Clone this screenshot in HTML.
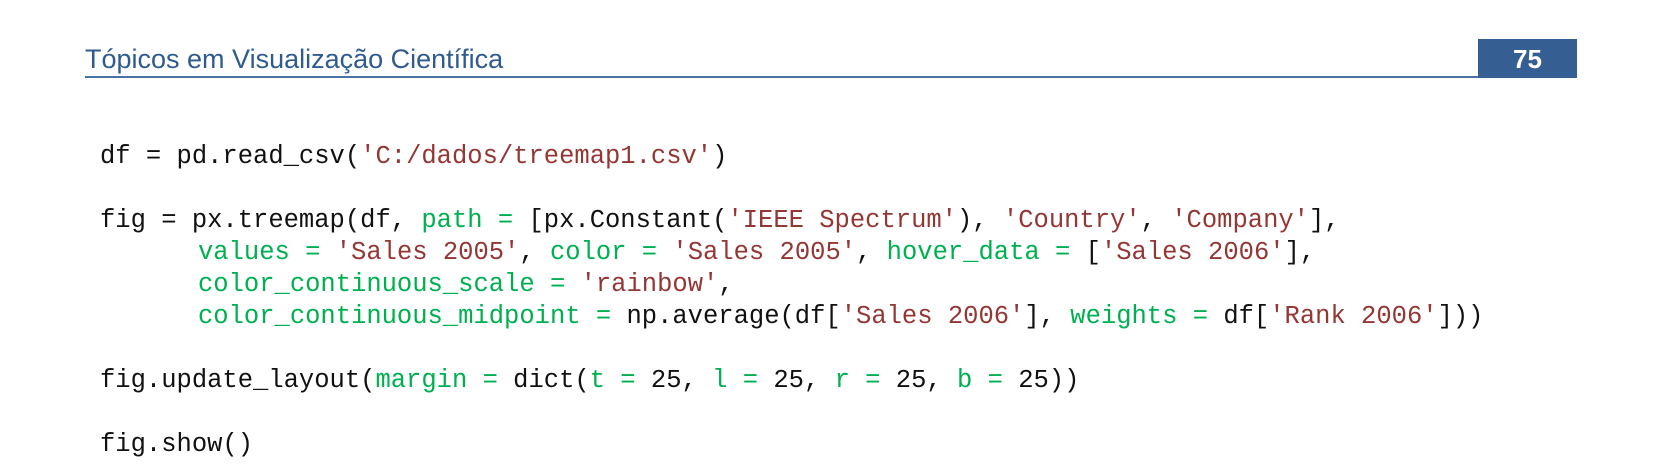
<!DOCTYPE html>
<html><head><meta charset="utf-8"><style>
body{margin:0;width:1654px;height:470px;background:#fff;position:relative;overflow:hidden}
.t{position:absolute;left:85px;top:46px;font:27px/27px "Liberation Sans",sans-serif;color:#2f5b8f;white-space:nowrap}
.ln{position:absolute;left:85px;top:76px;width:1393px;height:2px;background:#4a72a4}
.box{position:absolute;left:1478px;top:39px;width:99px;height:39px;background:#355f92;color:#fff;font:bold 26px "Liberation Sans",sans-serif;text-align:center;line-height:40px}
pre{position:absolute;left:100px;top:141px;margin:0;font:25.5px/32px "Liberation Mono",monospace;color:#111}
.i{display:inline-block;width:98px}
.g{color:#00b050}.r{color:#943634}
</style></head><body>
<div class="t">Tópicos em Visualização Científica</div>
<div class="ln"></div>
<div class="box">75</div>
<pre>df = pd.read_csv(<span class="r">'C:/dados/treemap1.csv'</span>)

fig = px.treemap(df, <span class="g">path =</span> [px.Constant(<span class="r">'IEEE Spectrum'</span>), <span class="r">'Country'</span>, <span class="r">'Company'</span>],
<span class="i"></span><span class="g">values =</span> <span class="r">'Sales 2005'</span>, <span class="g">color =</span> <span class="r">'Sales 2005'</span>, <span class="g">hover_data =</span> [<span class="r">'Sales 2006'</span>],
<span class="i"></span><span class="g">color_continuous_scale =</span> <span class="r">'rainbow'</span>,
<span class="i"></span><span class="g">color_continuous_midpoint =</span> np.average(df[<span class="r">'Sales 2006'</span>], <span class="g">weights =</span> df[<span class="r">'Rank 2006'</span>]))

fig.update_layout(<span class="g">margin =</span> dict(<span class="g">t =</span> 25, <span class="g">l =</span> 25, <span class="g">r =</span> 25, <span class="g">b =</span> 25))

fig.show()</pre>
</body></html>
